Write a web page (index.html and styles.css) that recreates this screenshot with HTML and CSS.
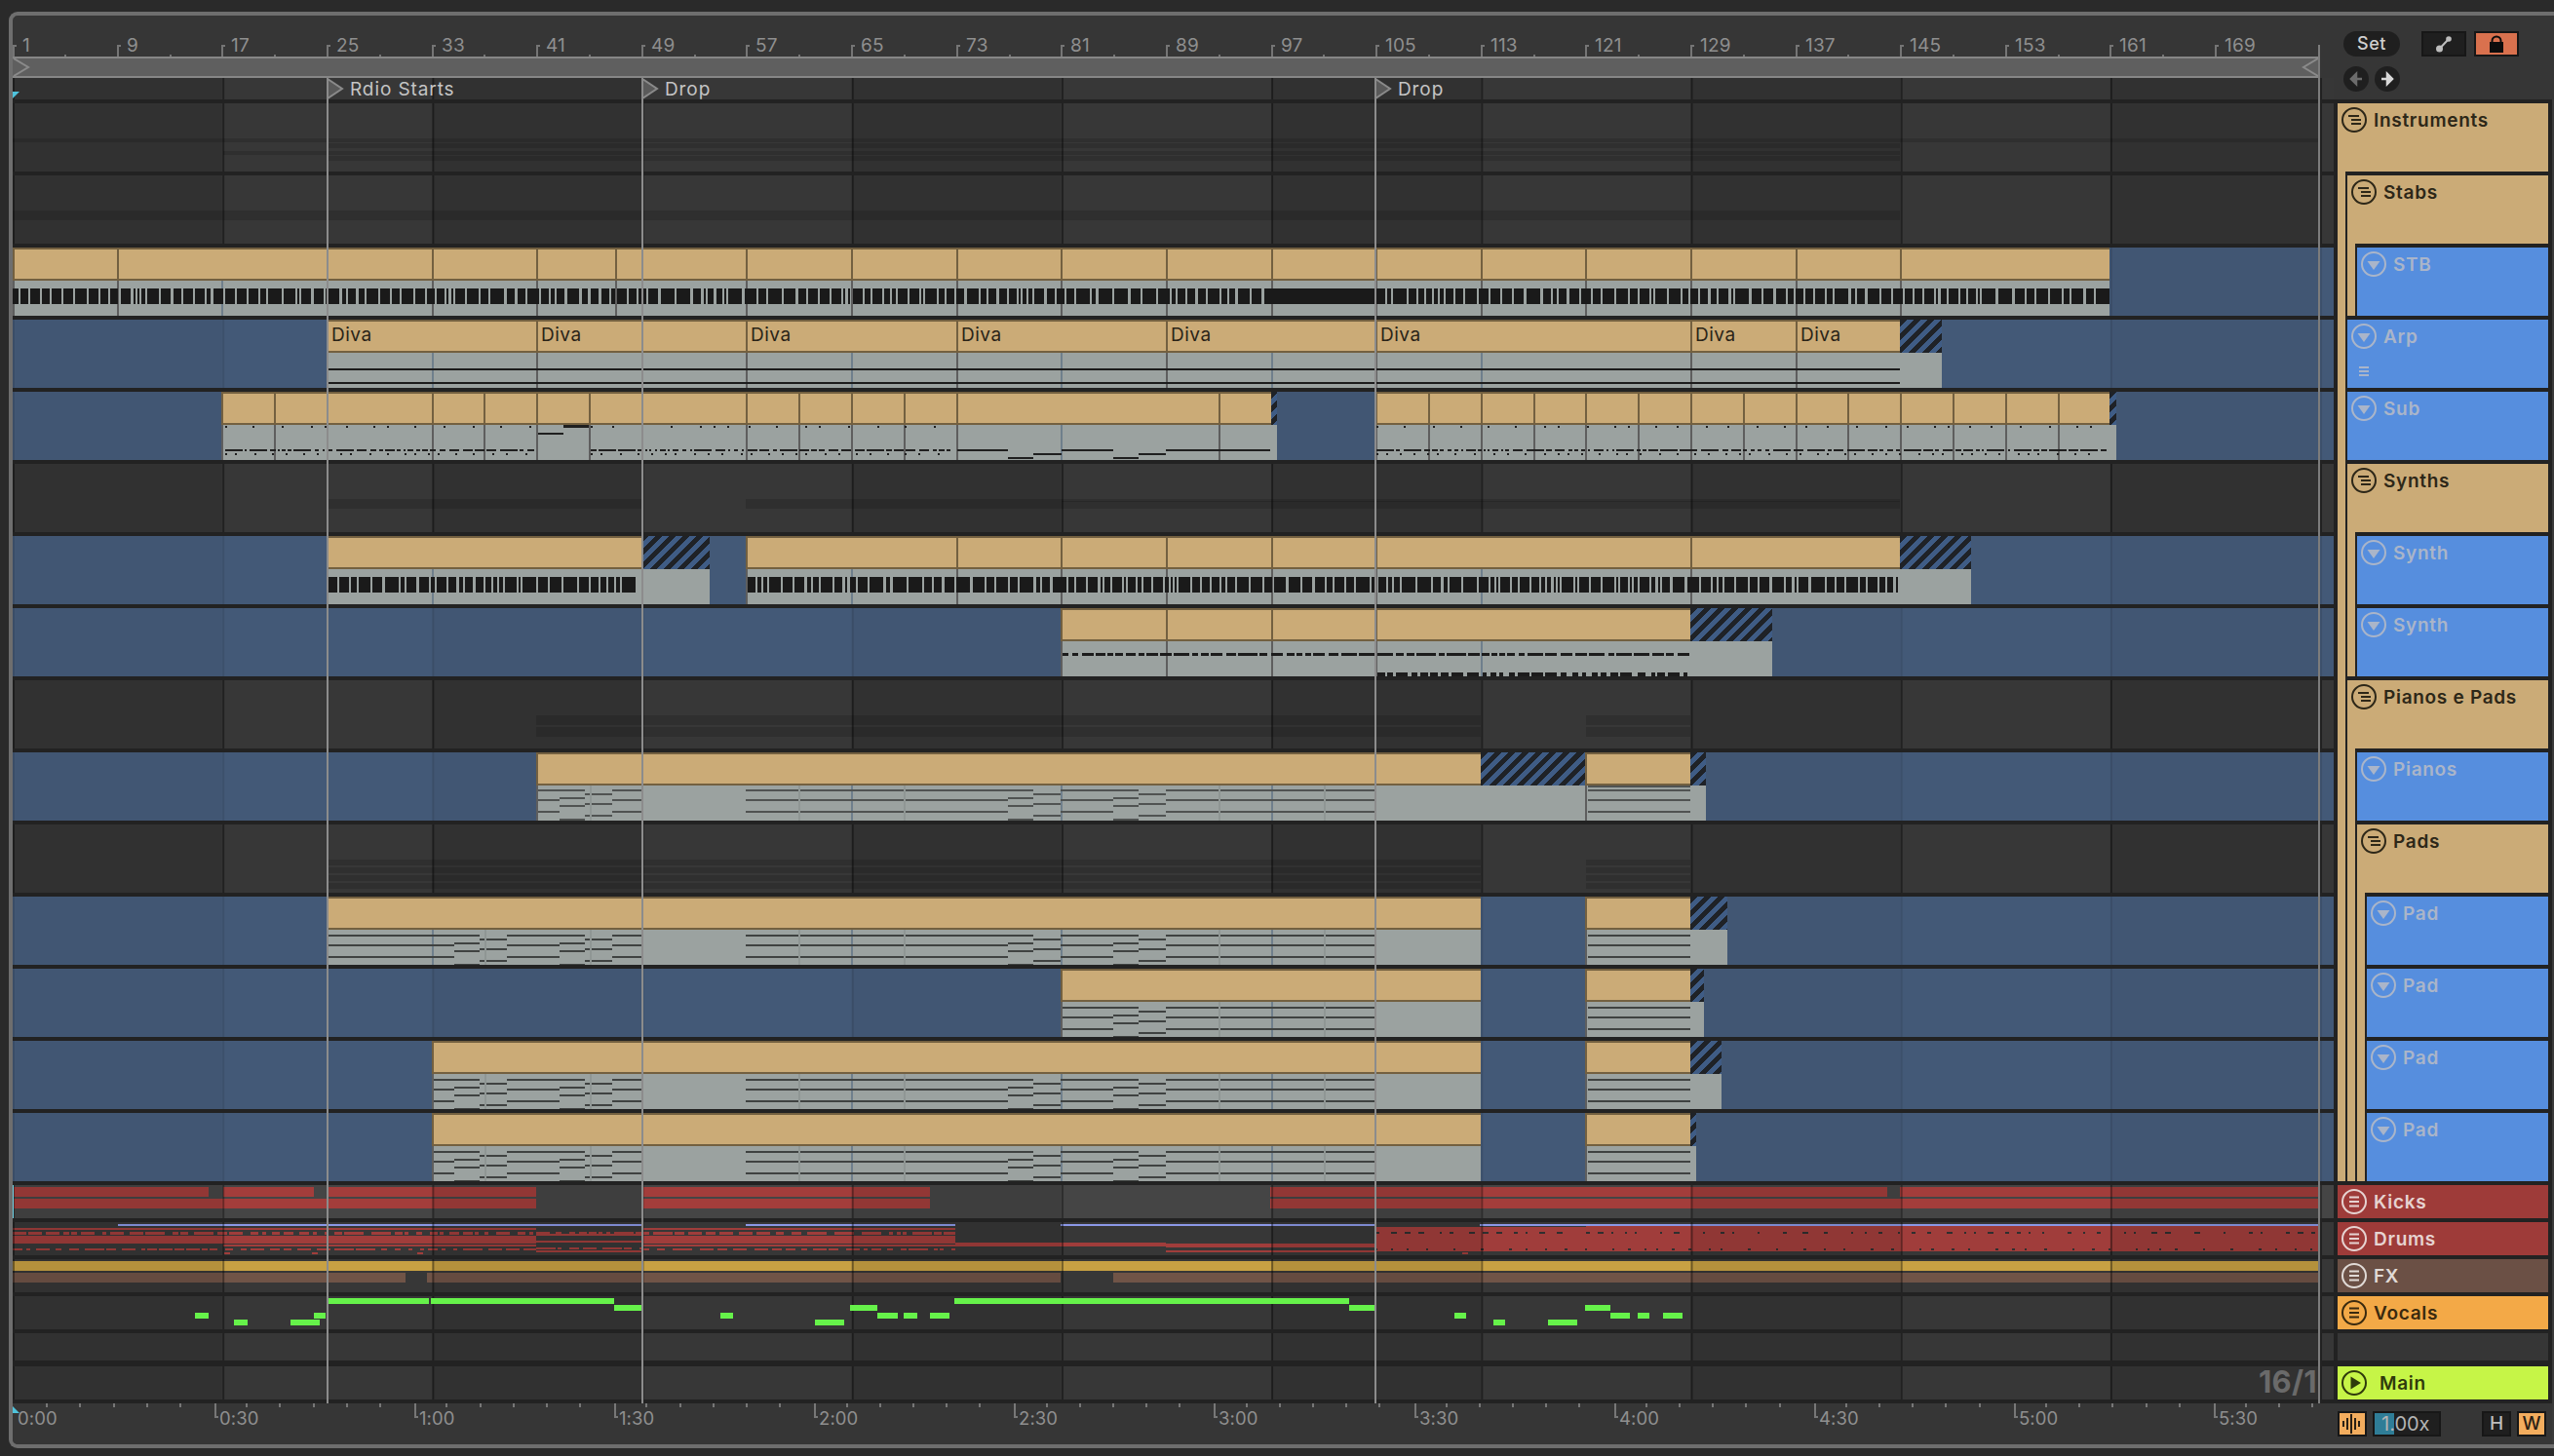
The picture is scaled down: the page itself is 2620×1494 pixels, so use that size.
FILE: index.html
```html
<!DOCTYPE html>
<html lang="en">
<head>
<meta charset="utf-8">
<title>Arrangement</title>
<link rel="stylesheet" href="styles.css">
</head>
<body>
<svg class="defs" width="0" height="0" aria-hidden="true">
  <symbol id="i-fold" viewBox="0 0 26 26"><circle cx="13" cy="13" r="12" fill="none" stroke="currentColor" stroke-width="2"/><path d="M7 9h11M10 13h10M10 17h10" fill="none" stroke="currentColor" stroke-width="2"/></symbol>
  <symbol id="i-group" viewBox="0 0 26 26"><circle cx="13" cy="13" r="12" fill="none" stroke="currentColor" stroke-width="2"/><path d="M8 8.500h10M8 13h10M8 17.500h10" fill="none" stroke="currentColor" stroke-width="2"/></symbol>
  <symbol id="i-track" viewBox="0 0 26 26"><circle cx="13" cy="13" r="12" fill="none" stroke="currentColor" stroke-width="2"/><path d="M6.500 10h13L13 19z" fill="currentColor"/></symbol>
  <symbol id="i-play" viewBox="0 0 26 26"><circle cx="13" cy="13" r="12" fill="none" stroke="currentColor" stroke-width="2"/><path d="M9.500 6.500v13L20 13z" fill="currentColor"/></symbol>
</svg>
<div class="frame">
  <main class="timeline" id="timeline">
    <div class="ruler" id="ruler"></div>
    <div class="scrub">
      <svg class="loop-start" width="18" height="18" viewBox="0 0 18 18"><path d="M1 0L16 9L1 18" fill="none" stroke="#8a8a8a" stroke-width="2"/></svg>
      <svg class="loop-end" width="18" height="18" viewBox="0 0 18 18"><path d="M17 0L2 9L17 18" fill="none" stroke="#8a8a8a" stroke-width="2"/></svg>
    </div>
    <div class="row dark markers" id="markers"><span class="cue-top"></span></div>
    <div class="tracks" id="tracks"></div>
    <div class="timeruler" id="timeruler"><span class="cue-bottom"></span></div>
    <div class="grid-hint">16/1</div>
  </main>
  <aside class="side">
    <div class="side-top">
      <div class="nav">
        <button class="pill">Set</button>
        <div class="arrows">
          <span class="round"><svg width="16" height="16" viewBox="0 0 16 16"><path d="M14 8H4M8 3L3 8l5 5z" stroke="#6c6c6c" stroke-width="2.500" fill="#6c6c6c"/></svg></span>
          <span class="round"><svg width="16" height="16" viewBox="0 0 16 16"><path d="M2 8h10M8 3l5 5-5 5z" stroke="#d8d8d8" stroke-width="2.500" fill="#d8d8d8"/></svg></span>
        </div>
      </div>
      <span class="tool"><svg width="16" height="18" viewBox="0 0 16 18"><circle cx="3.500" cy="14" r="3.500" fill="#bdbdbd"/><circle cx="13" cy="4" r="2.800" fill="#bdbdbd"/><path d="M3.500 14L13 4" stroke="#bdbdbd" stroke-width="2"/></svg></span>
      <span class="tool lock"><svg width="16" height="18" viewBox="0 0 16 18"><path d="M3.500 8V6a4.500 4.500 0 0 1 9 0v2" fill="none" stroke="#0c0c0c" stroke-width="2"/><rect x="1" y="7" width="14" height="11" fill="#0c0c0c"/></svg></span>
    </div>
    <div class="side-body">
      <section class="group tan">
        <header class="hdr"><svg class="ic"><use href="#i-fold"/></svg><span>Instruments</span></header>
        <div class="kids">
          <section class="group tan">
            <header class="hdr"><svg class="ic"><use href="#i-fold"/></svg><span>Stabs</span></header>
            <div class="kids">
              <div class="hdr off"><svg class="ic"><use href="#i-track"/></svg><span>STB</span></div>
            </div>
          </section>
          <div class="hdr off"><svg class="ic"><use href="#i-track"/></svg><span>Arp</span><svg class="stack" width="10" height="10" viewBox="0 0 10 10"><path d="M0 1h10M0 5h10M0 9h10" stroke="#aab5c9" stroke-width="2"/></svg></div>
          <div class="hdr off"><svg class="ic"><use href="#i-track"/></svg><span>Sub</span></div>
          <section class="group tan">
            <header class="hdr"><svg class="ic"><use href="#i-fold"/></svg><span>Synths</span></header>
            <div class="kids">
              <div class="hdr off"><svg class="ic"><use href="#i-track"/></svg><span>Synth</span></div>
              <div class="hdr off"><svg class="ic"><use href="#i-track"/></svg><span>Synth</span></div>
            </div>
          </section>
          <section class="group tan">
            <header class="hdr"><svg class="ic"><use href="#i-fold"/></svg><span>Pianos e Pads</span></header>
            <div class="kids">
              <div class="hdr off"><svg class="ic"><use href="#i-track"/></svg><span>Pianos</span></div>
              <section class="group tan">
                <header class="hdr"><svg class="ic"><use href="#i-fold"/></svg><span>Pads</span></header>
                <div class="kids">
                  <div class="hdr off"><svg class="ic"><use href="#i-track"/></svg><span>Pad</span></div>
                  <div class="hdr off"><svg class="ic"><use href="#i-track"/></svg><span>Pad</span></div>
                  <div class="hdr off"><svg class="ic"><use href="#i-track"/></svg><span>Pad</span></div>
                  <div class="hdr off"><svg class="ic"><use href="#i-track"/></svg><span>Pad</span></div>
                </div>
              </section>
            </div>
          </section>
        </div>
      </section>
      <div class="hdr slim kicks"><svg class="ic"><use href="#i-group"/></svg><span>Kicks</span></div>
      <div class="hdr slim kicks"><svg class="ic"><use href="#i-group"/></svg><span>Drums</span></div>
      <div class="hdr slim fx"><svg class="ic"><use href="#i-group"/></svg><span>FX</span></div>
      <div class="hdr slim vocals"><svg class="ic"><use href="#i-group"/></svg><span>Vocals</span></div>
      <div class="spacer"></div>
      <div class="hdr slim master"><svg class="ic"><use href="#i-play"/></svg><span>Main</span></div>
    </div>
    <div class="side-bottom">
      <span class="btn on"><svg width="22" height="22" viewBox="0 0 22 22"><path d="M2 8v6M6 5v12M10 1v20M14 5v12M18 8v6" stroke="#2a2014" stroke-width="2" fill="none"/></svg></span>
      <span class="zoomfield"><span class="zoomfill"></span><span class="zoomtext">1.00x</span></span>
      <span class="btn letter push">H</span>
      <span class="btn letter on">W</span>
    </div>
  </aside>
</div>
<script src="app.js"></script>
</body>
</html>
```
FILE: styles.css
```css
* { box-sizing: border-box; }
html, body { margin: 0; height: 100%; }
body {
  width: 2620px;
  height: 1494px;
  overflow: hidden;
  background: #2a2a2a;
  font-family: Inter, "Liberation Sans", sans-serif;
}
.defs { position: absolute; }
.frame {
  display: flex;
  height: 1474px;
  margin: 12px 0 0 9px;
  border: 4px solid #6e6e6e;
  border-right: 0;
  border-radius: 9px 0 0 9px;
  background: #363636;
  overflow: hidden;
}
.timeline { position: relative; width: 2381px; flex: none; display: flex; flex-direction: column; }

/* top ruler */
.ruler { position: relative; height: 42px; flex: none; }
.rlabel {
  position: absolute; top: 19px;
  font-size: 19px; line-height: 24px; color: #8f8f8f; letter-spacing: .2px;
}
.rtick {
  position: absolute; bottom: 0; width: 4px; height: 12px;
  border-left: 2px solid #757575; border-top: 2px solid #757575;
}
.rminor { position: absolute; bottom: 0; width: 2px; height: 2px; background: #757575; }

.scrub {
  position: relative; height: 22px; flex: none; margin-right: 15px;
  background: #5f5f5f;
  border-top: 2px solid #868686;
  border-bottom: 2px solid #868686;
}
.loop-start { position: absolute; left: 0; top: 0; }
.loop-end { position: absolute; right: 0; top: 0; }

/* rows */
.tracks {
  display: flex; flex-direction: column; gap: 4px; flex: none;
  padding: 4px 0;
  background: #222;
}
.row {
  --ln: .4; --st: .1;
  position: relative; flex: none; height: 70px; overflow: hidden;
  background-color: #373737;
}
.row::after {
  content: ""; position: absolute; inset: 0; z-index: 1; pointer-events: none;
  background-image:
    linear-gradient(90deg, transparent calc(100% - 2px), rgba(0,0,0,var(--ln)) calc(100% - 2px)),
    linear-gradient(90deg, rgba(0,0,0,var(--st)) 50%, transparent 50%);
  background-size: 215.2px 100%, 430.4px 100%;
  background-position: 2px 0, 0 0;
  background-repeat: repeat;
}
.row.blue { background-color: #435977; --ln: .1; --st: .03; }
.row.lite { background-color: #454545; height: 34px; --ln: .35; }
.row.dim { height: 34px; }
.row.gap { height: 28px; }
.row.last { height: 34px; margin-top: 2px; }
.markers { height: 22px; overflow: visible; }

.clip { position: absolute; top: 0; bottom: 0; z-index: 2; display: flex; flex-direction: column; }
.head {
  height: 34px; flex: none; padding-left: 3px;
  background: #cbab77;
  border: 2px solid #736040; border-width: 2px 0 2px 2px;
  font-size: 19px; line-height: 27px; color: #2a2417; letter-spacing: .5px;
  white-space: nowrap; overflow: hidden;
}
.body { flex: 1; background: #9ba2a0; border-left: 2px solid #5e5e5e; position: relative; }
.clip.tail .head {
  border: 0;
  background: repeating-linear-gradient(135deg, #1f2227 0 5px, #3f5c85 5px 10px);
}
.clip.tail .body { border-left: 0; }
.gtick { position: absolute; top: 0; bottom: 0; width: 2px; background: #6f7f8c; }

.notes { position: absolute; left: 0; top: 0; z-index: 3; display: block; }
.notes.under { z-index: 0; }
.lane { position: absolute; z-index: 0; }
.lane.red { background: #a33d3b; }
.lane.gold { background: #c8a143; }
.lane.brown { background: #705447; }
.edge { position: absolute; left: 0; top: 0; bottom: 0; width: 1px; background: #6fd3e6; z-index: 3; }

/* markers */
.flag { position: absolute; top: 0; z-index: 6; display: block; }
.mname {
  position: absolute; top: 1px; z-index: 6;
  font-size: 19px; line-height: 22px; color: #c4c4c4; white-space: nowrap; letter-spacing: .9px;
}
.vline { position: absolute; top: 64px; height: 1360px; width: 2px; background: #8c8c8c; z-index: 5; }
.vline.loop { top: 30px; height: 1394px; background: #7c7c7c; }
.cue-top {
  position: absolute; left: 0; top: 14px; z-index: 6; width: 0; height: 0;
  border-left: 7px solid #4fc3dc; border-top: 0 solid transparent;
  border-bottom: 7px solid transparent;
}
.cue-bottom {
  position: absolute; left: -1px; top: 2px; width: 0; height: 0;
  border-left: 8px solid #4fc3dc; border-top: 8px solid transparent;
}

/* bottom ruler */
.timeruler { position: relative; height: 42px; flex: none; background: #363636; }
.tlabel { position: absolute; top: 4px; font-size: 18.500px; line-height: 22px; color: #8f8f8f; letter-spacing: .1px; }
.tminor { position: absolute; top: 0; width: 2px; height: 4px; background: #777; }
.tmajor {
  position: absolute; top: 0; width: 4px; height: 15px;
  border-left: 2px solid #777; border-bottom: 2px solid #777;
}
.grid-hint {
  position: absolute; left: 2304px; top: 1384px; z-index: 7;
  font-size: 31px; line-height: 36px; font-weight: 700; color: #6a6a6a; letter-spacing: .2px;
}

/* side panel */
.side { flex: 1; display: flex; flex-direction: column; min-width: 0; }
.side-top { height: 86px; flex: none; display: flex; align-items: flex-start; padding: 16px 0 0 10px; gap: 8px; }
.nav { display: flex; flex-direction: column; gap: 10px; margin-right: 14px; }
.pill {
  width: 58px; height: 26px; padding: 0; border: 0; border-radius: 13px;
  background: #1f1f1f; color: #cfcfcf; font: 500 18px/26px Inter, sans-serif; letter-spacing: .5px;
}
.arrows { display: flex; gap: 6px; }
.round { width: 26px; height: 26px; border-radius: 50%; background: #1f1f1f; display: flex; align-items: center; justify-content: center; }
.tool { width: 46px; height: 26px; background: #1f1f1f; border: 2px solid #171717; display: flex; align-items: center; justify-content: center; }
.tool.lock { background: #d9714e; }

.side-body {
  flex: none; display: flex; flex-direction: column; gap: 4px;
  padding: 4px 4px 4px;
  background: #222;
  border-right: 2px solid #3a3a3a;
}
.group.tan { background: #cbab77; }
.hdr {
  position: relative; display: flex; align-items: flex-start; gap: 7px;
  height: 70px; flex: none; padding: 4px 0 0 4px;
  font-size: 19px; line-height: 26px; font-weight: 600; letter-spacing: .7px; color: #2d2718;
}
.hdr span { margin-top: 1px; }
.ic { width: 26px; height: 26px; flex: none; }
.kids {
  display: flex; flex-direction: column; gap: 4px;
  margin-left: 8px; padding-top: 4px;
  background: #222;
}
.group > .kids { padding-left: 2px; }
.off { background: #568ede; color: #aab5c9; }
.stack { position: absolute; left: 12px; top: 48px; }
.slim { height: 34px; }
.kicks { background: #9e3b39; color: #e6d3d1; }
.fx { background: #6b5045; color: #e0dad6; }
.vocals { background: #f3a947; color: #3a2a0f; }
.master { background: #c6f547; color: #2f3a0c; margin-top: 2px; }
.master span { margin-left: 6px; }
.spacer { height: 28px; flex: none; background: #363636; }
.side-bottom { flex: none; display: flex; align-items: flex-start; padding: 8px 6px 0 4px; height: 42px; border-right: 2px solid #3a3a3a; }
.btn {
  width: 30px; height: 26px; background: #1f1f1f; border: 2px solid #171717;
  display: flex; align-items: center; justify-content: center; color: #bdbdbd;
}
.btn.on { background: #f3ad5e; color: #2a2014; }
.letter { font-size: 19px; line-height: 22px; font-weight: 500; }
.push { margin-left: auto; margin-right: 6px; }
.zoomfield {
  position: relative; width: 70px; height: 26px; margin-left: 6px;
  background: #1f1f1f; border: 2px solid #171717;
  font-size: 20px; line-height: 22px; color: #b4b4b4;
}
.zoomfill { position: absolute; left: 0; top: 0; bottom: 0; width: 20px; background: #2f7d97; }
.zoomtext { position: relative; display: block; padding-left: 7px; }
```
FILE: app.js
```js
// Builds the arrangement (rulers, clips, notes) from the song data below.
const ORIGIN = 13;
const barX = b => Math.max(13, Math.round(335 + (b - 25) * 13.452));
function seeded(s) {
  return () => { s = (s * 1664525 + 1013904223) >>> 0; return (s >>> 8) / 16777216; };
}
const pick = (r, a) => a[Math.floor(r() * a.length)];
const rect = (x, y, w, h, f) =>
  `<rect x="${x - ORIGIN}" y="${y}" width="${w}" height="${h}" fill="${f}"/>`;

function el(cls, css, html) {
  const d = document.createElement('div');
  d.className = cls;
  if (css) d.style.cssText = css;
  if (html) d.innerHTML = html;
  return d;
}
function svgLayer(h, inner, under) {
  return `<svg class="notes${under ? ' under' : ''}" width="2381" height="${h}" shape-rendering="crispEdges">${inner}</svg>`;
}

/* ---------- rulers ---------- */
const ruler = document.getElementById('ruler');
for (let b = 1; b <= 169; b += 8) {
  const x = barX(b) - ORIGIN;
  ruler.append(el('rtick', `left:${x}px`));
  ruler.append(el('rlabel', `left:${x + 10}px`, String(b)));
  if (b < 169) ruler.append(el('rminor', `left:${barX(b + 4) - ORIGIN}px`));
}
const tr = document.getElementById('timeruler');
for (let i = 0; i <= 69; i++) {
  const x = 34.18 * i;
  if (i % 6 === 0) {
    if (i) tr.append(el('tmajor', `left:${Math.round(x) + 2}px`));
    const m = Math.floor(i / 12), s = i % 12 ? '30' : '00';
    tr.append(el('tlabel', `left:${Math.round(x) + (i ? 7 : 5)}px`, `${m}:${s}`));
  } else if (x < 2366) {
    tr.append(el('tminor', `left:${Math.round(x)}px`));
  }
}

/* ---------- markers ---------- */
const markers = document.getElementById('markers');
const tl = document.getElementById('timeline');
[[335, 'Rdio Starts'], [658, 'Drop'], [1410, 'Drop']].forEach(([x, name]) => {
  const left = x - ORIGIN;
  markers.insertAdjacentHTML('beforeend',
    `<svg class="flag" style="left:${left}px" width="18" height="22" viewBox="0 0 18 22"><path d="M1 1V21L16 11Z" fill="#5a5a5a" stroke="#8a8a8a" stroke-width="2"/></svg>`);
  markers.append(el('mname', `left:${left + 24}px`, name));
  tl.append(el('vline', `left:${left}px`));
});
tl.append(el('vline loop', `left:${2378 - ORIGIN}px`));

/* ---------- clip helpers ---------- */
function clipChain(bars, names) {
  const out = [];
  for (let i = 0; i < bars.length - 1; i++)
    out.push({ x1: barX(bars[i]), x2: barX(bars[i + 1]), name: names ? names : '' });
  return out;
}
function addClips(row, clips) {
  clips.forEach(c => {
    const d = el('clip' + (c.tail ? ' tail' : ''), `left:${c.x1 - ORIGIN}px;width:${c.x2 - c.x1}px`);
    d.append(el('head', '', c.name || ''));
    const body = el('body');
    if (!c.tail) {
      for (let k = 1; k < 12; k++) {
        const g = barX(1 + 16 * k);
        if (g > c.x1 + 2 && g < c.x2) body.append(el('gtick', `left:${g - c.x1 - 2}px`));
      }
    }
    d.append(body);
    row.append(d);
  });
}
const tail = (x1, x2) => ({ x1, x2, tail: true });

/* ---------- note patterns ---------- */
function barcode(r, x1, x2, y, h) {
  let s = '', x = x1;
  while (x < x2 - 2) {
    const w = Math.min(pick(r, [2, 4, 6, 8, 8, 10, 10, 12, 14]), x2 - x);
    s += rect(x, y, w, h, '#1a1a1a');
    x += w + pick(r, [2, 2, 2, 2, 3]);
  }
  return s;
}
function dashes(r, x1, x2, y, h, c, ws, gs) {
  let s = '', x = x1;
  while (x < x2 - 1) {
    const w = Math.min(pick(r, ws), x2 - x);
    s += rect(x, y, w, h, c);
    x += w + pick(r, gs);
  }
  return s;
}
function subPattern(r, x1, x2) {
  const ink = '#1f1f1f';
  return dashes(r, x1 + 2, x2 - 2, 35, 2, ink, [2], [12, 20, 26, 28]) +
    dashes(r, x1 + 2, x2 - 2, 59, 2, ink, [2, 4, 6, 10, 18], [2, 2, 3, 4]) +
    dashes(r, x1 + 2, x2 - 2, 63, 2, ink, [2], [8, 12, 16, 18]);
}
const ALT = [466, 574, 1034, 1142];
function padLines(x1, x2, c, d) {
  const pts = [x1];
  ALT.forEach(s => { if (s > x1 && s < x2) { pts.push(s, s + 26, s + 54); } });
  pts.push(x2);
  pts.sort((a, b) => a - b);
  let s = '';
  for (let i = 0; i < pts.length - 1; i++) {
    const a = pts[i], b = Math.min(pts[i + 1], x2);
    if (b <= a) continue;
    let ys = [38, 48, 60];
    ALT.forEach(q => {
      if (a >= q && a < q + 26) ys = [38, 46, 54, 68];
      else if (a >= q + 26 && a < q + 54) ys = [42, 52, 64];
    });
    ys.forEach(y => { s += rect(a, y + d, b - a, 2, c); });
  }
  [497, 605, 819, 927, 1250, 1358].forEach(t => {
    if (t > x1 && t < x2) s += rect(t, 34, 2, 36, '#8f9694');
  });
  return s;
}
const MUTE = 'rgba(0,0,0,.13)';
const mute = (ranges, bands) => {
  let s = '';
  ranges.forEach(([a, b]) => bands.forEach(([y, h]) => { s += rect(a, y, b - a, h, MUTE); }));
  return s;
};

/* ---------- tracks ---------- */
const tracks = document.getElementById('tracks');
function track(cls) {
  const r = el('row ' + cls);
  tracks.append(r);
  return r;
}
const R = seeded(77);

// Instruments + Stabs folders
track('dark').innerHTML = svgLayer(70,
  mute([[13, 2380]], [[36, 4]]) + mute([[229, 1949]], [[49, 4]]) + mute([[335, 1949]], [[41, 5], [54, 5]]), true);
track('dark').innerHTML = svgLayer(70, mute([[13, 1949]], [[36, 10]]), true);

// STB
let row = track('blue');
addClips(row, clipChain([1, 9, 25, 33, 41, 47, 57, 65, 73, 81, 89, 97, 105, 113, 121, 129, 137, 145, 161]));
row.insertAdjacentHTML('beforeend', svgLayer(70,
  barcode(R, 13, barX(97), 42, 16) + rect(barX(97), 42, barX(105) - barX(97), 16, '#1a1a1a') + barcode(R, barX(105), barX(161), 42, 16)));

// Arp
row = track('blue');
addClips(row, clipChain([25, 41, 57, 73, 89, 105, 129, 137, 145], 'Diva').concat(tail(barX(145), 1992)));
row.insertAdjacentHTML('beforeend', svgLayer(70,
  rect(336, 50, barX(145) - 336, 2, '#1c1c1c') + rect(336, 64, barX(145) - 336, 2, '#1c1c1c')));

// Sub
row = track('blue');
addClips(row, clipChain([17, 21, 25, 33, 37, 41, 45, 57, 61, 65, 69, 73, 93, 97]).concat(tail(barX(97), 1310),
  clipChain([105, 109, 113, 117, 121, 125, 129, 133, 137, 141, 145, 149, 153, 157, 161]), tail(barX(161), 2171)));
{
  const ink = '#1f1f1f';
  let s = subPattern(R, 229, 550) + subPattern(R, 604, 980) + subPattern(R, 1410, 2163);
  s += rect(552, 42, 26, 2, ink) + rect(578, 34, 26, 3, ink);
  [[982, 59, 52], [1034, 67, 26], [1060, 63, 29], [1089, 59, 53], [1142, 67, 26], [1168, 63, 28], [1196, 59, 107]]
    .forEach(([x, y, w]) => { s += rect(x, y, w, 2, ink); });
  row.insertAdjacentHTML('beforeend', svgLayer(70, s));
}

// Synths folder
track('dark').innerHTML = svgLayer(70, mute([[335, 658], [765, 1949]], [[36, 10]]) + mute([[1089, 1949]], [[38, 1]]), true);

// Synth
row = track('blue');
addClips(row, clipChain([25, 49]).concat(tail(658, 728), clipChain([57, 73, 81, 89, 97, 105, 129, 145]), tail(barX(145), 2022)));
row.insertAdjacentHTML('beforeend', svgLayer(70, barcode(R, 336, 654, 42, 16) + barcode(R, 767, 1949, 42, 16)));

// Synth
row = track('blue');
addClips(row, clipChain([81, 89, 97, 105, 129]).concat(tail(barX(129), 1818)));
row.insertAdjacentHTML('beforeend', svgLayer(70,
  dashes(R, 1090, 1734, 46, 3, '#1c1c1c', [6, 8, 10, 12, 16, 20], [2, 2, 3, 4]) +
  dashes(R, 1413, 1734, 66, 4, '#1c1c1c', [4, 6, 8, 12], [2, 3, 4, 6])));

// Pianos e Pads folder
track('dark').innerHTML = svgLayer(70, mute([[550, 1519], [1627, 1734]], [[36, 10], [48, 10]]), true);

// Pianos
row = track('blue');
addClips(row, [{ x1: barX(41), x2: barX(113) }, tail(barX(113), barX(121)), { x1: barX(121), x2: barX(129) }, tail(barX(129), 1750)]);
row.insertAdjacentHTML('beforeend', svgLayer(70,
  padLines(552, 658, '#505352', 0) + padLines(765, 1411, '#505352', 0) +
  padLines(1629, 1734, '#505352', 0) + rect(1629, 34, 105, 2, '#505352')));

// Pads folder
track('dark').innerHTML = svgLayer(70, mute([[335, 1519], [1627, 1734]], [[36, 6], [44, 6], [52, 6], [60, 6]]), true);

// four Pad tracks
[[barX(25), 1772], [barX(81), 1748], [barX(33), 1766], [barX(33), 1740]].forEach(([start, end]) => {
  const r = track('blue');
  addClips(r, [{ x1: start, x2: barX(113) }, { x1: barX(121), x2: barX(129) }, tail(barX(129), end)]);
  let s = '';
  if (start < 658) s += padLines(start + 2, 658, '#3f4241', 1);
  s += padLines(Math.max(start + 2, 765), 1411, '#3f4241', 1);
  s += padLines(1629, 1734, '#3f4241', 1);
  r.insertAdjacentHTML('beforeend', svgLayer(70, s));
});

// Kicks
row = track('lite');
[[13, 214, 2, 10], [229, 322, 2, 10], [336, 550, 2, 10], [660, 954, 2, 10], [1303, 1936, 2, 10], [1949, 2378, 2, 10],
 [13, 550, 14, 10], [660, 954, 14, 10], [1303, 2378, 14, 10]].forEach(([a, b, y, h]) => {
  row.append(el('lane red', `left:${a - ORIGIN}px;width:${b - a}px;top:${y}px;height:${h}px`));
});
row.append(el('edge'));

// Drums
row = track('dim');
{
  const r = seeded(1234), red = '#a03d3b', bg = '#2f2f2f', Y = 1254;
  const B = (a, b, y, h, c = red) => rect(a, y - Y, b - a, h, c);
  const D = (a, b, y, h) => dashes(r, a, b, y - Y, h, red, [4, 6, 8, 10, 14, 20], [2, 4, 6, 8]);
  let s = '';
  [[121, 658], [765, 980], [1088, 1411], [1518, 2378]].forEach(([a, b]) => { s += B(a, b, 1256, 2, '#8b98e6'); });
  const zoneA = (a, b) => B(a, b, 1260, 2) + D(a, b, 1264, 3) + B(a, b, 1268, 8) + B(Math.max(a, 229), b, 1277, 2) + D(a, b, 1281, 2);
  s += zoneA(13, 550) + zoneA(660, 980);
  s += B(230, 236, 1285, 2) + B(428, 434, 1285, 2) + B(320, 326, 1285, 2);
  s += D(550, 658, 1264, 3) + B(550, 658, 1266, 2) + B(550, 658, 1273, 2) + D(550, 658, 1280, 2) + B(550, 658, 1283, 2);
  s += B(980, 1196, 1275, 4) + B(1196, 1410, 1276, 4) + B(1196, 1410, 1283, 2);
  s += B(1411, 2378, 1259, 25);
  s += dashes(r, 1411, 2378, 1264 - Y, 2, bg, [2, 4, 6], [8, 12, 16, 24]);
  s += dashes(r, 1411, 2378, 1281 - Y, 2, bg, [2, 3], [10, 14, 18, 26]);
  s += B(1627, 2378, 1258, 4) + B(1500, 1506, 1285, 2);
  row.innerHTML = svgLayer(34, s, true);
}

// FX
row = track('dim');
row.append(el('lane gold', 'left:0;width:2365px;top:2px;height:10px'));
[[13, 416], [438, 1088], [1142, 2378]].forEach(([a, b]) => {
  row.append(el('lane brown', `left:${a - ORIGIN}px;width:${b - a}px;top:14px;height:10px`));
});

// Vocals
row = track('dim');
{
  const LANES = [2, 9, 17, 24];
  const notes = [
    [200, 214, 2], [240, 254, 3], [298, 328, 3], [322, 334, 2], [335, 440, 0], [442, 630, 0], [630, 658, 1],
    [739, 752, 2], [836, 866, 3], [872, 900, 1], [900, 921, 2], [927, 941, 2], [954, 974, 2], [979, 1384, 0], [1384, 1410, 1],
    [1492, 1504, 2], [1532, 1544, 3], [1588, 1618, 3], [1626, 1652, 1], [1652, 1672, 2], [1680, 1692, 2], [1706, 1726, 2]
  ];
  let s = '';
  notes.forEach(([a, b, l]) => {
    s += rect(a, LANES[l], b - a, 6, '#66f24a');
  });
  row.innerHTML = svgLayer(34, s);
}

// empty + Main
track('dim gap');
track('dim last');
```
